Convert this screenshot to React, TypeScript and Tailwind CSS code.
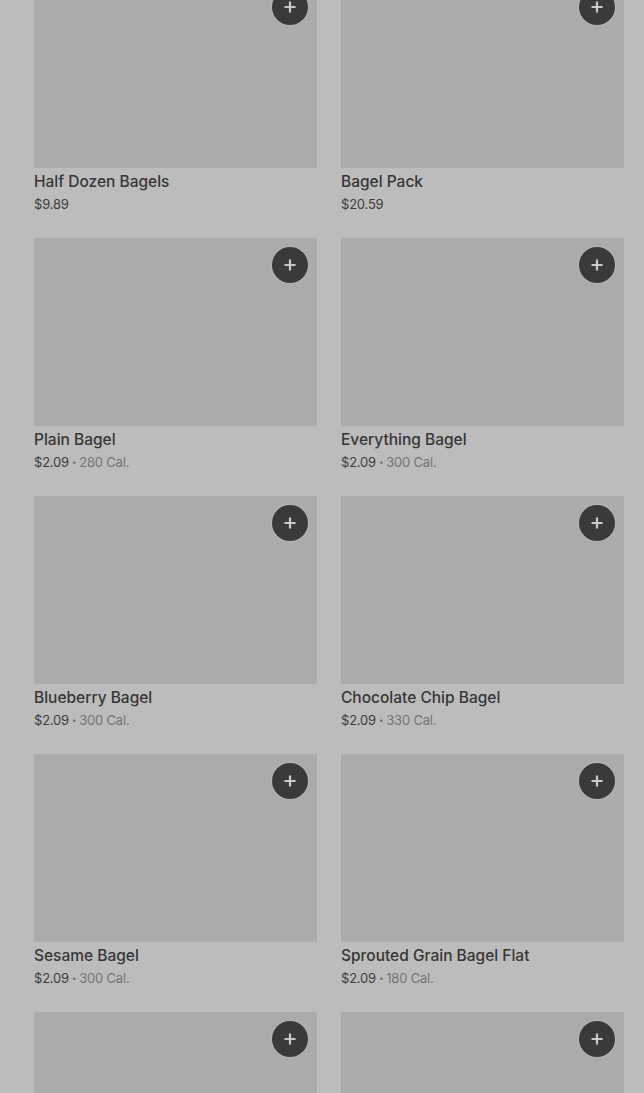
import React from "react";

type Item = { name: string; price: string; cal?: string };

const items: Item[] = [
  { name: "Half Dozen Bagels", price: "$9.89" },
  { name: "Bagel Pack", price: "$20.59" },
  { name: "Plain Bagel", price: "$2.09", cal: "280 Cal." },
  { name: "Everything Bagel", price: "$2.09", cal: "300 Cal." },
  { name: "Blueberry Bagel", price: "$2.09", cal: "300 Cal." },
  { name: "Chocolate Chip Bagel", price: "$2.09", cal: "330 Cal." },
  { name: "Sesame Bagel", price: "$2.09", cal: "300 Cal." },
  { name: "Sprouted Grain Bagel Flat", price: "$2.09", cal: "180 Cal." },
];

function PlusButton() {
  return (
    <button className="absolute top-[9px] right-[9px] w-[36px] h-[36px] rounded-full bg-[#3a3a3a] flex items-center justify-center shadow-[0_0_0_1px_rgba(200,200,200,0.35)]">
      <svg width="14" height="14" viewBox="0 0 14 14">
        <path d="M7 1.5v11M1.5 7h11" stroke="#c9c9c9" strokeWidth="2.2" strokeLinecap="butt" />
      </svg>
    </button>
  );
}

function Card({ item }: { item?: Item }) {
  return (
    <div className="flex flex-col">
      <div className="relative h-[188px] bg-[#ababab]">
        <PlusButton />
      </div>
      {item && (
        <>
          <div className="mt-[2px] text-[15.5px] leading-[24px] font-medium text-[#363636]">{item.name}</div>
          <div className="text-[13px] leading-[20px] tracking-[-0.2px] text-[#3d3d3d] flex items-center">
            <span>{item.price}</span>
            {item.cal && (
              <>
                <span className="mx-[3px] text-[8px] text-[#707070]">•</span>
                <span className="text-[#747474]">{item.cal}</span>
              </>
            )}
          </div>
        </>
      )}
    </div>
  );
}

export default function App() {
  return (
    <div
      className="h-[1093px] overflow-hidden bg-[#bcbcbc] pl-[34px] pr-[20px]"
      style={{ fontFamily: "Inter, 'Noto Sans', sans-serif" }}
    >
      <div className="-mt-[20px] grid grid-cols-2 gap-x-[24px] gap-y-[24px]">
        {items.map((it) => (
          <Card key={it.name} item={it} />
        ))}
        <Card />
        <Card />
      </div>
    </div>
  );
}
